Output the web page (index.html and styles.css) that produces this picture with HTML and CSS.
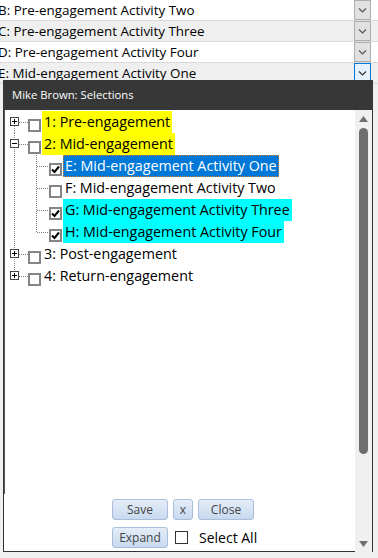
FILE: index.html
```html
<!DOCTYPE html>
<html lang="en">
  <head>
    <meta charset="UTF-8" />
    <title>Selections</title>
    <link rel="stylesheet" href="styles.css">
  </head>
  <body>
    <!-- Background form rows -->
    <div class="fields">
      <div class="field"><span class="val">B: Pre-engagement Activity Two</span><span class="drop"><svg width="9" height="5" viewBox="0 0 9 5"><path d="M1 0.5l3.5 3.5 3.5-3.5" fill="none" stroke="#555" stroke-width="1.2"/></svg></span></div>
      <div class="field alt"><span class="val">C: Pre-engagement Activity Three</span><span class="drop"><svg width="9" height="5" viewBox="0 0 9 5"><path d="M1 0.5l3.5 3.5 3.5-3.5" fill="none" stroke="#555" stroke-width="1.2"/></svg></span></div>
      <div class="field"><span class="val">D: Pre-engagement Activity Four</span><span class="drop"><svg width="9" height="5" viewBox="0 0 9 5"><path d="M1 0.5l3.5 3.5 3.5-3.5" fill="none" stroke="#555" stroke-width="1.2"/></svg></span></div>
      <div class="field alt"><span class="val">E: Mid-engagement Activity One</span><span class="drop focus"><svg width="9" height="5" viewBox="0 0 9 5"><path d="M1 0.5l3.5 3.5 3.5-3.5" fill="none" stroke="#333" stroke-width="1.2"/></svg></span></div>
    </div>

    <!-- Selections popup -->
    <div class="dialog">
      <div class="title">Mike Brown: Selections</div>
      <div class="body">
        <div class="main">
          <div class="tree">
            <div class="node first">
              <span class="exp"><svg width="9" height="9" viewBox="0 0 9 9"><rect x=".5" y=".5" width="8" height="8" fill="#fff" stroke="#444"/><path d="M2 4.5h5M4.5 2v5" stroke="#000"/></svg></span>
              <span class="cb"></span>
              <span class="label yellow">1: Pre-engagement</span>
            </div>
            <div class="node">
              <span class="exp"><svg width="9" height="9" viewBox="0 0 9 9"><rect x=".5" y=".5" width="8" height="8" fill="#fff" stroke="#444"/><path d="M2 4.5h5" stroke="#000"/></svg></span>
              <span class="cb"></span>
              <span class="label yellow">2: Mid-engagement</span>
            </div>
            <div class="node child">
              <span class="exp pass"></span><span class="ind"></span>
              <span class="cb"><svg width="9" height="9" viewBox="0 0 9 9"><path d="M1 4.5l2.5 2.5L8 1.5" fill="none" stroke="#000" stroke-width="2"/></svg></span>
              <span class="label selected">E: Mid-engagement Activity One</span>
            </div>
            <div class="node child">
              <span class="exp pass"></span><span class="ind"></span>
              <span class="cb"></span>
              <span class="label">F: Mid-engagement Activity Two</span>
            </div>
            <div class="node child">
              <span class="exp pass"></span><span class="ind"></span>
              <span class="cb"><svg width="9" height="9" viewBox="0 0 9 9"><path d="M1 4.5l2.5 2.5L8 1.5" fill="none" stroke="#000" stroke-width="2"/></svg></span>
              <span class="label cyan">G: Mid-engagement Activity Three</span>
            </div>
            <div class="node child">
              <span class="exp pass"></span><span class="ind last"></span>
              <span class="cb"><svg width="9" height="9" viewBox="0 0 9 9"><path d="M1 4.5l2.5 2.5L8 1.5" fill="none" stroke="#000" stroke-width="2"/></svg></span>
              <span class="label cyan">H: Mid-engagement Activity Four</span>
            </div>
            <div class="node">
              <span class="exp"><svg width="9" height="9" viewBox="0 0 9 9"><rect x=".5" y=".5" width="8" height="8" fill="#fff" stroke="#444"/><path d="M2 4.5h5M4.5 2v5" stroke="#000"/></svg></span>
              <span class="cb"></span>
              <span class="label">3: Post-engagement</span>
            </div>
            <div class="node last">
              <span class="exp"><svg width="9" height="9" viewBox="0 0 9 9"><rect x=".5" y=".5" width="8" height="8" fill="#fff" stroke="#444"/><path d="M2 4.5h5M4.5 2v5" stroke="#000"/></svg></span>
              <span class="cb"></span>
              <span class="label">4: Return-engagement</span>
            </div>
          </div>

          <!-- Buttons -->
          <div class="footer">
            <div class="btn-row">
              <button class="btn">Save</button>
              <button class="btn small">x</button>
              <button class="btn">Close</button>
            </div>
            <div class="btn-row">
              <button class="btn">Expand</button>
              <label class="select-all"><span class="sa-box"></span>Select All</label>
            </div>
          </div>
        </div>

        <div class="scrollbar">
          <span class="arrow"><svg width="9" height="6" viewBox="0 0 9 6"><path d="M0 6L4.5 0 9 6z" fill="#707070"/></svg></span>
          <span class="track"><span class="thumb"></span></span>
          <span class="arrow down"><svg width="9" height="6" viewBox="0 0 9 6"><path d="M0 0L4.5 6 9 0z" fill="#707070"/></svg></span>
        </div>
      </div>
    </div>
  </body>
</html>
```

FILE: styles.css
```css
body {
  margin: 0;
  background-color: #f0f0f0;
  font-family: "Open Sans", "Noto Sans", sans-serif;
  color: #000;
  overflow: hidden;
}
.fields {
  width: 378px;
}
.field {
  display: flex;
  align-items: center;
  height: 20px;
  border-bottom: 1px solid #dadada;
  background-color: #fff;
  font-size: 13.4px;
}
.field.alt {
  background-color: #efefef;
}
.field .val {
  flex: 1;
  margin-left: -2px;
  white-space: nowrap;
}
.drop {
  display: flex;
  align-items: center;
  justify-content: center;
  box-sizing: border-box;
  width: 17px;
  height: 20px;
  margin-right: 7px;
  background-color: #e1e1e1;
  border: 1px solid #adadad;
}
.drop.focus {
  background-color: #e5f1fb;
  border-color: #0078d7;
}

.dialog {
  position: absolute;
  left: 3px;
  top: 80px;
  width: 370px;
  height: 472px;
  box-sizing: border-box;
  border: 1px solid #333;
  border-top: none;
  background-color: #fff;
  display: flex;
  flex-direction: column;
}
.title {
  height: 30px;
  margin: 0 -1px;
  padding-left: 9px;
  background-color: #373737;
  color: #fff;
  font-size: 11.3px;
  line-height: 30px;
}
.body {
  flex: 1;
  display: flex;
}
.main {
  flex: 1;
  display: flex;
  flex-direction: column;
}
.tree {
  height: 384px;
  padding-top: 1px;
  box-sizing: border-box;
  border-left: 1px solid #555;
  font-size: 14.3px;
}
.node {
  display: flex;
  height: 22px;
}
.exp {
  flex: none;
  width: 23px;
  height: 22px;
  box-sizing: border-box;
  padding: 6px 0 0 5px;
  background:
    repeating-linear-gradient(to right, #808080 0 1px, transparent 1px 2px) 14px 11px / 9px 1px no-repeat,
    repeating-linear-gradient(to bottom, #808080 0 1px, transparent 1px 2px) 9px 0 / 1px 100% no-repeat;
}
.exp svg {
  display: block;
}
.node.first .exp {
  background:
    repeating-linear-gradient(to right, #808080 0 1px, transparent 1px 2px) 14px 11px / 9px 1px no-repeat,
    repeating-linear-gradient(to bottom, #808080 0 1px, transparent 1px 2px) 9px 11px / 1px 11px no-repeat;
}
.node.last .exp {
  background:
    repeating-linear-gradient(to right, #808080 0 1px, transparent 1px 2px) 14px 11px / 9px 1px no-repeat,
    repeating-linear-gradient(to bottom, #808080 0 1px, transparent 1px 2px) 9px 0 / 1px 11px no-repeat;
}
.exp.pass {
  background: repeating-linear-gradient(to bottom, #808080 0 1px, transparent 1px 2px) 9px 0 / 1px 100% no-repeat;
}
.ind {
  flex: none;
  width: 21px;
  height: 22px;
  background:
    repeating-linear-gradient(to right, #808080 0 1px, transparent 1px 2px) 9px 11px / 12px 1px no-repeat,
    repeating-linear-gradient(to bottom, #808080 0 1px, transparent 1px 2px) 8px 0 / 1px 100% no-repeat;
}
.ind.last {
  background:
    repeating-linear-gradient(to right, #808080 0 1px, transparent 1px 2px) 9px 11px / 12px 1px no-repeat,
    repeating-linear-gradient(to bottom, #808080 0 1px, transparent 1px 2px) 8px 0 / 1px 11px no-repeat;
}
.cb {
  flex: none;
  display: flex;
  align-items: center;
  justify-content: center;
  width: 13px;
  height: 13px;
  margin-top: 8px;
  box-sizing: border-box;
  border: 2px solid #858585;
  background-color: #fff;
}
.label {
  margin-left: 1px;
  height: 22px;
  padding: 0 2px;
  line-height: 21px;
  white-space: nowrap;
  box-sizing: border-box;
}
.yellow {
  background-color: #ffff00;
}
.cyan {
  background-color: #00ffff;
}
.selected {
  background-color: #0078d7;
  color: #fff;
  border: 1px dotted #d08030;
  padding: 0 1px;
  line-height: 19px;
}

.footer {
  flex: 1;
  padding: 5px 0 0 108px;
}
.btn-row {
  display: flex;
  align-items: center;
  gap: 5px;
  margin-bottom: 7px;
}
.btn {
  width: 56px;
  height: 21px;
  padding: 0;
  border: 1px solid #a9bedb;
  border-radius: 3px;
  background: linear-gradient(#e4edf8, #c8d9ef);
  color: #444;
  font-family: "Open Sans", "Noto Sans", sans-serif;
  font-size: 12px;
}
.btn.small {
  width: 20px;
}
.select-all {
  display: flex;
  align-items: center;
  margin-left: 2px;
  font-size: 14px;
}
.sa-box {
  width: 13px;
  height: 13px;
  box-sizing: border-box;
  border: 1px solid #333;
  background-color: #fff;
  margin-right: 11px;
}

.scrollbar {
  width: 17px;
  display: flex;
  flex-direction: column;
  align-items: center;
  background-color: #f0f0f0;
}
.arrow {
  height: 17px;
  display: flex;
  align-items: center;
  justify-content: center;
}
.arrow svg {
  display: block;
}
.arrow.down {
  height: 14px;
  align-items: flex-start;
}
.track {
  flex: 1;
  padding-top: 1px;
}
.thumb {
  display: block;
  width: 9px;
  height: 326px;
  border-radius: 5px;
  background-color: #6e6e6e;
}
```
